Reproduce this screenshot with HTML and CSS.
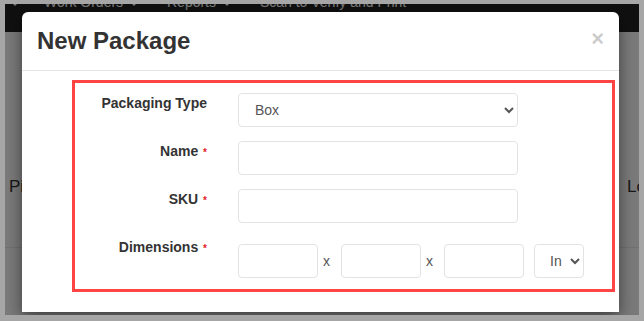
FILE: index.html
```html
<!DOCTYPE html>
<html lang="en">
<head>
    <meta charset="UTF-8">
    <title>New Package</title>
    <link rel="stylesheet" href="styles.css">
</head>
<body>
    <div class="screen">
        <nav class="navbar">
            <span class="nav-item"><span class="caret"></span></span>
            <span class="nav-item nav-work">Work Orders <span class="caret"></span></span>
            <span class="nav-item nav-reports">Reports <span class="caret"></span></span>
            <span class="nav-item nav-scan">Scan to Verify and Print</span>
        </nav>
        <div class="page">
            <div class="page-row">
                <span>Pick List</span>
                <span>Logout</span>
            </div>
            <div class="page-rule"></div>
        </div>

        <div class="backdrop"></div>

        <div class="modal">
            <div class="modal-header">
                <span class="close">&times;</span>
                <h4 class="modal-title">New Package</h4>
            </div>
            <div class="modal-body">
                <form class="package-form">
                    <label class="form-label">Packaging Type</label>
                    <div class="form-field">
                        <select class="form-control select-wide">
                            <option>Box</option>
                            <option>Envelope</option>
                            <option>Pallet</option>
                        </select>
                    </div>

                    <label class="form-label">Name <span class="req">*</span></label>
                    <div class="form-field">
                        <input type="text" class="form-control input-wide">
                    </div>

                    <label class="form-label">SKU <span class="req">*</span></label>
                    <div class="form-field">
                        <input type="text" class="form-control input-wide">
                    </div>

                    <label class="form-label">Dimensions <span class="req">*</span></label>
                    <div class="form-field dims">
                        <input type="text" class="form-control input-dim">
                        <span class="times">x</span>
                        <input type="text" class="form-control input-dim">
                        <span class="times">x</span>
                        <input type="text" class="form-control input-dim">
                        <select class="form-control select-unit">
                            <option>In</option>
                            <option>Cm</option>
                        </select>
                    </div>
                </form>
            </div>
        </div>
    </div>
</body>
</html>
```

FILE: styles.css
```css
/* Grundlayout */
body {
    margin: 0;
    padding: 4px 5px 6px 5px;
    background: #a6a6a6;
    font-family: 'Liberation Sans', Arial, sans-serif;
    color: #333;
}

.screen {
    position: relative;
    height: 311px;
    overflow: hidden;
    background: #ffffff;
}

/* Navigationsleiste */
.navbar {
    height: 28px;
    background: #222;
    color: #fff;
    font-size: 14px;
    line-height: 20px;
    display: flex;
    align-items: flex-start;
    padding-left: 3px;
}

.nav-item {
    margin-top: -12px;
    white-space: nowrap;
}

.nav-work {
    margin-left: 24px;
}

.nav-reports {
    margin-left: 28px;
}

.nav-scan {
    margin-left: 28px;
}

.caret {
    display: inline-block;
    width: 0;
    height: 0;
    margin-left: 2px;
    vertical-align: middle;
    border-top: 5px solid;
    border-left: 5px solid transparent;
    border-right: 5px solid transparent;
}

/* Seite hinter dem Dialog */
.page-row {
    display: flex;
    justify-content: space-between;
    padding: 145px 0 0 4px;
    font-size: 17px;
    color: #333;
    white-space: nowrap;
}

.page-row span:last-child {
    margin-right: -40px;
}

.page-rule {
    margin-top: 50px;
    border-top: 1px solid #e6eef5;
}

.backdrop {
    position: absolute;
    inset: 0;
    background: rgba(0, 0, 0, 0.52);
}

/* Dialog */
.modal {
    position: absolute;
    left: 17px;
    top: 8px;
    width: 597px;
    height: 300px;
    background: #fff;
    border-radius: 6px 6px 0 0;
    box-shadow: 0 5px 15px rgba(0, 0, 0, 0.5);
}

.modal-header {
    padding: 15px;
    border-bottom: 1px solid #e5e5e5;
}

.modal-title {
    margin: 0;
    font-size: 24px;
    line-height: 28px;
    font-weight: bold;
    color: #333;
}

.close {
    float: right;
    margin-top: 1px;
    font-size: 22px;
    font-weight: bold;
    line-height: 1;
    color: #000;
    opacity: 0.2;
}

.modal-body {
    padding: 9px 4px 20px 50px;
}

/* Formular */
.package-form {
    border: 3px solid #ff4444;
    padding: 10px 0 11px 0;
    display: grid;
    grid-template-columns: 132px 1fr;
    column-gap: 31px;
    row-gap: 14px;
}

.form-label {
    text-align: right;
    font-size: 14px;
    font-weight: bold;
    line-height: 20px;
    color: #333;
}

.req {
    color: #e02424;
    font-size: 10px;
    margin-left: 1px;
}

.form-control {
    box-sizing: border-box;
    height: 34px;
    padding: 6px 12px;
    font-family: inherit;
    font-size: 14px;
    color: #555;
    background: #fff;
    border: 1px solid #e3e3e3;
    border-radius: 4px;
    outline: none;
}

.select-wide,
.input-wide {
    width: 280px;
}

.dims {
    display: flex;
    align-items: center;
    padding-top: 7px;
}

.input-dim {
    width: 80px;
}

.times {
    font-size: 14px;
    color: #555;
    margin: 0 11px 0 5px;
}

.select-unit {
    width: 50px;
    margin-left: 10px;
    padding: 6px 2px 6px 11px;
}
```
